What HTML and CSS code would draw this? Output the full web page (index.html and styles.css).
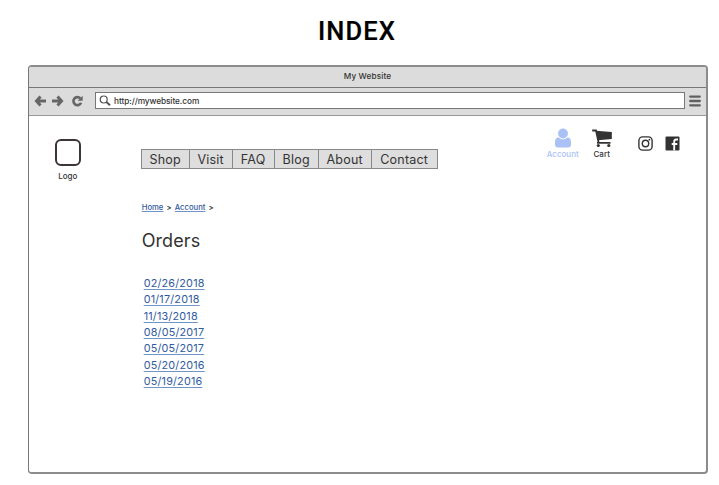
FILE: index.html
```html
<!DOCTYPE html>
<html lang="en">
<head>
<meta charset="utf-8">
<title>My Website</title>
<link rel="stylesheet" href="styles.css">
</head>
<body>
<h1 class="board-title">INDEX</h1>
<div class="window">
  <div class="titlebar">My Website</div>
  <div class="toolbar">
    <svg class="controls" viewBox="0 0 50 16" width="50" height="16" fill="none" stroke="#666" stroke-width="3">
      <path d="M6.500 3.500 2.500 8l4 4.500M2.500 8H12M23.500 3.500l4 4.500-4 4.500M27.500 8H18"/>
      <path d="M47.100 9.700a4 4 0 1 1-.8-4.400" stroke-width="2.600"/>
      <path d="M48.700 2.800v5h-5z" fill="#666" stroke="none"/>
    </svg>
    <div class="address">
      <svg viewBox="0 0 12 12" width="12" height="12" fill="none" stroke="#555"><circle cx="4.700" cy="4.500" r="3.500" stroke-width="1.200"/><path d="m7.400 7 3.600 3.300" stroke-width="2"/></svg>
      <span>http://mywebsite.com</span>
    </div>
    <svg class="menu" viewBox="0 0 12 12" width="12" height="12" stroke="#606060" stroke-width="2.300" stroke-linecap="round"><path d="M1.200 1.600h9.600M1.200 6h9.600M1.200 10.300h9.600"/></svg>
  </div>
  <div class="page">
    <div class="logo"><div class="logo-box"></div><span>Logo</span></div>
    <main class="main">
      <nav class="nav">
        <a class="shop">Shop</a><a class="visit">Visit</a><a class="faq">FAQ</a><a class="blog">Blog</a><a class="about">About</a><a class="contact">Contact</a>
      </nav>
      <div class="crumbs"><a>Home</a> <b>&gt;</b> <a>Account</a> <b>&gt;</b></div>
      <h2>Orders</h2>
      <ul class="orders">
        <li><a>02/26/2018</a></li>
        <li><a>01/17/2018</a></li>
        <li><a>11/13/2018</a></li>
        <li><a>08/05/2017</a></li>
        <li><a>05/05/2017</a></li>
        <li><a>05/20/2016</a></li>
        <li><a>05/19/2016</a></li>
      </ul>
    </main>
    <div class="actions">
      <div class="action account">
        <svg viewBox="0 0 18 20" width="18" height="20" fill="#a9c1f5"><circle cx="9" cy="5.500" r="4.900"/><path d="M4.300 9.300C1.800 9.800 1 12 1 14.500v2Q1 19.500 4 19.500h10q3 0 3-3v-2c0-2.500-.8-4.700-3.300-5.200a6.200 6.200 0 0 1-9.400 0z"/></svg>
        <span>Account</span>
      </div>
      <div class="action cart">
        <svg viewBox="0 0 22 20" width="22" height="20"><path d="M1.200 2.500H5L7.600 14.500" fill="none" stroke="#333" stroke-width="1.800"/><path d="M4.800 2.700 20.800 4v7L7 12.300z" fill="#333"/><path d="M6 14.900h13.500" stroke="#333" stroke-width="1.600"/><circle cx="7.300" cy="17.500" r="1.600" fill="#333"/><circle cx="17.800" cy="17.500" r="1.600" fill="#333"/></svg>
        <span>Cart</span>
      </div>
      <svg class="instagram" viewBox="0 0 15 15" width="15" height="15" fill="none" stroke="#333" stroke-width="1.400"><rect x=".9" y=".9" width="13.200" height="13.200" rx="3.700"/><circle cx="7.500" cy="7.500" r="3.200"/><circle cx="11.400" cy="3.700" r=".9" fill="#333" stroke="none"/></svg>
      <svg class="facebook" viewBox="0 0 15 15" width="15" height="15"><rect x=".5" y=".5" width="14" height="14" rx="1" fill="#333"/><path d="M13 3.500h-1.600q-2.200 0-2.200 2.100V14.500M6.700 8h5.600" fill="none" stroke="#fff" stroke-width="1.900"/></svg>
    </div>
  </div>
</div>
</body>
</html>
```
FILE: styles.css
```css
* { box-sizing: border-box; }
body { margin: 0; background: #fff; color: #333; font-family: Inter, "Liberation Sans", sans-serif; overflow: hidden; }
svg { display: block; flex: none; }
.board-title { margin: 0; height: 65px; padding: 16px 0 0 318px; font: 500 25.500px/30px Roboto, sans-serif; letter-spacing: 1.100px; color: #000; -webkit-text-stroke: .2px #000; }
.window { width: 680px; height: 409px; margin-left: 28px; border: 2px solid #8c8c8c; border-left: 1px solid #777; border-radius: 4px; overflow: hidden; }
.titlebar { height: 21px; background: #dcdcdc; border-bottom: 1px solid #777; font-size: 8.200px; line-height: 18px; letter-spacing: .15px; font-weight: 500; text-align: center; }
.toolbar { display: flex; align-items: center; height: 28px; padding: 0 5px 2px 5px; background: #dcdcdc; border-bottom: 1px solid #999; }
.address { display: flex; align-items: center; gap: 3px; width: 591px; height: 17px; margin-left: 11px; padding-left: 3px; background: #fff; border: 1px solid #777; font-size: 8.300px; font-weight: 500; letter-spacing: -.08px; }
.menu { margin-left: 4px; }
.page { display: flex; height: 357px; }
.logo { width: 78px; padding-top: 23px; display: flex; flex-direction: column; align-items: center; font-size: 8px; font-weight: 500; }
.logo-box { width: 26px; height: 27px; margin-bottom: 5px; border: 2px solid #3b3537; border-radius: 6px; }
.main { width: 330px; padding: 33px 0 0 34px; }
.nav { display: flex; width: 297px; height: 20px; border: 1px solid #888; background: #dedede; font-size: 12.500px; line-height: 19px; }
.nav a { border-right: 1px solid #888; text-align: center; letter-spacing: .2px; }
.nav a:last-child { border: 0; }
.shop { width: 48px; }
.visit { width: 43px; }
.faq { width: 42px; }
.blog { width: 44px; }
.about { width: 53px; }
.contact { width: 65px; }
.crumbs { margin: 33px 0 0 1px; font-size: 7.700px; line-height: 12px; font-weight: 500; }
.crumbs a, .orders a { color: #315aa0; text-decoration: underline; text-decoration-color: #7293c8; text-decoration-thickness: 1px; text-underline-offset: 2px; }
.crumbs a { text-underline-offset: 1px; }
.crumbs b { font-weight: 600; margin: 0 1px; }
h2 { margin: 15px 0 0 1px; font-size: 18px; line-height: 24px; font-weight: 400; letter-spacing: .1px; }
.orders { margin: 23px 0 0 3px; padding: 0; list-style: none; font-size: 10.800px; line-height: 16.350px; letter-spacing: .2px; }
.actions { display: flex; align-items: flex-start; width: 270px; padding-left: 108px; }
.action { display: flex; flex-direction: column; align-items: center; padding-top: 12px; font-size: 8px; line-height: 12px; font-weight: 500; }
.action span { margin-top: 0; }
.account { width: 36px; color: #a9c1f5; }
.cart { width: 24px; margin: 0 17px 0 9px; }
.instagram { margin: 20px 12px 0 7px; }
.facebook { margin-top: 20px; }
```
